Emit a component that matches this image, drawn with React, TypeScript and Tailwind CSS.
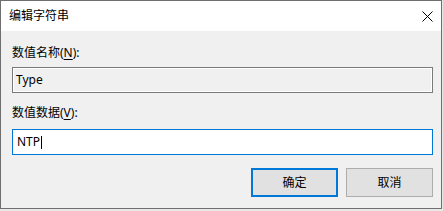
import React from 'react'

const font = { fontFamily: '"Segoe UI", "Noto Sans", "Noto Sans CJK SC", sans-serif' }

export default function App() {
  return (
    <div className="w-[443px] h-[211px] bg-[#e8e8e8]">
      <div
        className="w-[442px] h-[209px] border border-[#6f6f6f] flex flex-col text-[12px] text-black bg-[#f0f0f0]"
        style={font}
      >
        {/* Title bar */}
        <div className="h-[30px] bg-white flex items-center justify-between pl-[8px] pr-[8px] shrink-0">
          <span className="leading-[16px]">编辑字符串</span>
          <svg width="11" height="11" viewBox="0 0 11 11" className="mt-[0px]">
            <path d="M0.5 0.5 L10.5 10.5 M10.5 0.5 L0.5 10.5" stroke="#000" strokeWidth="1" />
          </svg>
        </div>

        {/* Body */}
        <div className="flex flex-col pl-[11px] pt-[14px]">
          <div className="leading-[16px] h-[16px]">
            数值名称(<span className="underline underline-offset-2">N</span>):
          </div>
          <div className="mt-[6px] w-[421px] h-[26px] border border-[#7a7a7a] shadow-[inset_0_0_0_1px_#ffffff] bg-[#f0f0f0] flex items-center pl-[3px]">
            <span className="leading-[16px]">Type</span>
          </div>

          <div className="mt-[12px] leading-[16px] h-[16px]">
            数值数据(<span className="underline underline-offset-2">V</span>):
          </div>
          <div className="mt-[8px] w-[421px] h-[26px] border border-[#0078d7] bg-white flex items-center pl-[4px]">
            <span className="leading-[16px]">NTP</span>
            <span className="inline-block w-px h-[13px] bg-black ml-[1px]" />
          </div>

          {/* Buttons */}
          <div className="mt-[13px] flex gap-[8px] pl-[239px]">
            <button className="w-[87px] h-[29px] border-2 border-[#0078d7] bg-[#e1e1e1] flex items-center justify-center leading-[16px]">
              确定
            </button>
            <button className="w-[87px] h-[29px] border border-[#adadad] bg-[#e1e1e1] flex items-center justify-center leading-[16px]">
              取消
            </button>
          </div>
        </div>
      </div>
    </div>
  )
}
